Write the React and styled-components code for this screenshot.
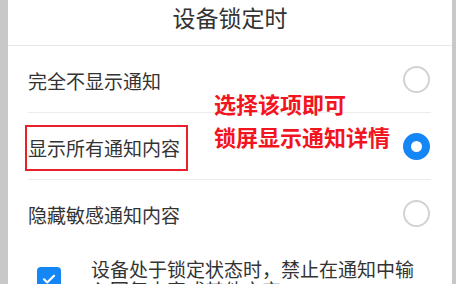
import React, { useState } from "react";
import styled, { createGlobalStyle } from "styled-components";

const GlobalStyle = createGlobalStyle`
  html, body {
    margin: 0;
    padding: 0;
    background: #c8c8c8;
  }
  body {
    font-family: "Noto Sans CJK SC", "Noto Sans", sans-serif;
  }
`;

const options = [
  { id: "none", label: "完全不显示通知" },
  { id: "all", label: "显示所有通知内容", marked: true },
  { id: "hide", label: "隐藏敏感通知内容", last: true },
];

const App = () => {
  const [selected, setSelected] = useState("all");
  const [blockReply, setBlockReply] = useState(true);

  return (
    <>
      <GlobalStyle />
      <Screen>
        <Panel>
          <Header>设备锁定时</Header>
          {options.map((opt) => (
            <Row key={opt.id} last={opt.last} onClick={() => setSelected(opt.id)}>
              <Label marked={opt.marked}>{opt.label}</Label>
              <Radio checked={selected === opt.id} />
            </Row>
          ))}
          <CheckRow onClick={() => setBlockReply(!blockReply)}>
            <CheckBox checked={blockReply}>
              {blockReply && (
                <svg width="16" height="16" viewBox="0 0 16 16">
                  <path
                    d="M3 8.3l3.2 3.2L13 4.8"
                    fill="none"
                    stroke="#fff"
                    strokeWidth="2.2"
                    strokeLinecap="round"
                    strokeLinejoin="round"
                  />
                </svg>
              )}
            </CheckBox>
            <CheckText>设备处于锁定状态时，禁止在通知中输入回复内容或其他文字</CheckText>
          </CheckRow>
          <Note>
            选择该项即可
            <br />
            锁屏显示通知详情
          </Note>
        </Panel>
      </Screen>
    </>
  );
};

export default App;

const Screen = styled.div`
  width: 456px;
  height: 284px;
  overflow: hidden;
  background: #c8c8c8;
  display: flex;
  padding: 0 4px 0 8px;
  box-sizing: border-box;
`;

const Panel = styled.div`
  position: relative;
  flex: 1;
  background: #fff;
  display: flex;
  flex-direction: column;
`;

const Header = styled.div`
  height: 46px;
  line-height: 35px;
  text-align: center;
  font-size: 23px;
  color: #333;
  border-bottom: 1px solid #e6e6e6;
  box-sizing: border-box;
  flex-shrink: 0;
`;

const Row = styled.div`
  height: 66px;
  margin: 0 21px 0 20px;
  display: flex;
  align-items: center;
  justify-content: space-between;
  border-bottom: ${(p) => (p.last ? "none" : "1px solid #ececec")};
  flex-shrink: 0;
  cursor: pointer;
`;

const Label = styled.span`
  font-size: 19px;
  color: #333;
  line-height: 26px;
  margin-top: 4px;
  padding: ${(p) => (p.marked ? "8px 6px 8px 1px" : "0")};
  margin-left: ${(p) => (p.marked ? "-3px" : "0")};
  border: ${(p) => (p.marked ? "2px solid #e8202a" : "none")};
`;

const Radio = styled.span`
  width: 27px;
  height: 27px;
  border-radius: 50%;
  box-sizing: border-box;
  border: ${(p) => (p.checked ? "8px solid #1486f5" : "2px solid #d2d2d2")};
  background: #fff;
  margin-right: 1px;
`;

const CheckRow = styled.div`
  display: flex;
  align-items: center;
  gap: 30px;
  padding: 12px 21px 0 29px;
  flex-shrink: 0;
`;

const CheckBox = styled.span`
  width: 24px;
  height: 24px;
  border-radius: 4px;
  flex-shrink: 0;
  display: grid;
  place-items: center;
  background: ${(p) => (p.checked ? "#1486f5" : "#fff")};
  border: ${(p) => (p.checked ? "none" : "2px solid #d2d2d2")};
  box-sizing: border-box;
`;

const CheckText = styled.span`
  font-size: 19px;
  line-height: 21px;
  color: #333;
`;

const Note = styled.div`
  position: absolute;
  left: 206px;
  top: 87px;
  font-size: 22px;
  line-height: 33px;
  font-weight: 700;
  color: #f2141e;
  pointer-events: none;
`;
